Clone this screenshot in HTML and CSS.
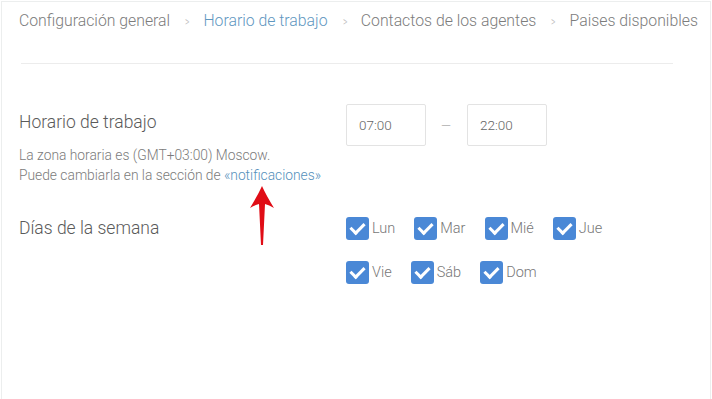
FILE: index.html
```html
<!DOCTYPE html>
<html lang="es">
  <head>
    <meta charset="UTF-8" />
    <title>Horario de trabajo</title>
    <link rel="stylesheet" href="styles.css">
  </head>
  <body>
    <div class="panel">
      <nav class="crumbs">
        <span>Configuración general</span>
        <span class="sep">&gt;</span>
        <span class="active">Horario de trabajo</span>
        <span class="sep">&gt;</span>
        <span>Contactos de los agentes</span>
        <span class="sep">&gt;</span>
        <span>Paises disponibles</span>
      </nav>
      <hr class="rule" />

      <section class="row hours">
        <div class="label">
          <h2>Horario de trabajo</h2>
          <p class="hint">La zona horaria es (GMT+03:00) Moscow.<br />
            Puede cambiarla en la sección de <a href="#">«notificaciones»</a></p>
          <!-- red pointer over the link -->
          <svg class="pointer" width="26" height="60" viewBox="0 0 26 60">
            <path d="M13 0 Q17 9 25 22 Q20 19 16 18 L14 59 L12 59 L10 18 Q6 19 1 22 Q9 9 13 0 Z" fill="#e00d16" />
          </svg>
        </div>
        <div class="times">
          <div class="time">07:00</div>
          <span class="dash">—</span>
          <div class="time">22:00</div>
        </div>
      </section>

      <section class="row days">
        <div class="label">
          <h2>Días de la semana</h2>
        </div>
        <div class="checks">
          <div class="line">
            <label class="check"><span class="box"></span>Lun</label>
            <label class="check"><span class="box"></span>Mar</label>
            <label class="check"><span class="box"></span>Mié</label>
            <label class="check"><span class="box"></span>Jue</label>
          </div>
          <div class="line">
            <label class="check"><span class="box"></span>Vie</label>
            <label class="check"><span class="box"></span>Sáb</label>
            <label class="check"><span class="box"></span>Dom</label>
          </div>
        </div>
      </section>
    </div>
  </body>
</html>
```

FILE: styles.css
```css
:root {
  --text: #777;
  --blue: #4a88d6;
  --link: #5590bb;
}
* {
  box-sizing: border-box;
}
body {
  margin: 0;
  font-family: Roboto, "Liberation Sans", Arial, sans-serif;
  font-weight: 300;
  color: var(--text);
  background: #fff;
}
.panel {
  margin: 1px 1px 0 1px;
  height: 398px;
  border: 1px solid #eceeee;
  border-bottom: none;
  padding: 8px 0 0 17px;
}
.crumbs {
  display: flex;
  align-items: center;
  font-size: 15.8px;
  color: #7c7c7c;
  white-space: nowrap;
  height: 20px;
}
.crumbs .sep {
  font-size: 12px;
  color: #bbb;
  margin: 3px 13px 0 14px;
  transform: scaleX(0.7);
}
.crumbs .active {
  color: #5f97bf;
}
.rule {
  margin: 33px 0 0 2px;
  width: 652px;
  border: none;
  border-top: 1px solid #ececec;
}
.row {
  display: flex;
  align-items: flex-start;
}
.label {
  width: 327px;
  position: relative;
}
.label h2 {
  margin: 0;
  font-size: 17.5px;
  font-weight: 300;
  line-height: 20px;
  color: #5a5a5a;
}
.hours {
  margin-top: 40px;
}
.hours h2 {
  margin-top: 8px;
}
.hint {
  margin: 13px 0 0 0;
  font-size: 13.8px;
  line-height: 20px;
  color: #7b7b7b;
}
.hint a {
  color: var(--link);
  text-decoration: none;
}
.pointer {
  position: absolute;
  left: 230px;
  top: 82px;
}
.times {
  display: flex;
  align-items: center;
}
.time {
  width: 80px;
  height: 42px;
  border: 1px solid #e3e3e3;
  border-radius: 2px;
  padding: 12px 0 0 12px;
  font-size: 13.5px;
  color: #666;
}
.dash {
  margin: 0 16px 0 15px;
  color: #888;
  font-size: 13px;
}
.days {
  margin-top: 32px;
}
.days h2 {
  margin-top: 1px;
}
.line {
  display: flex;
  margin-bottom: 21px;
}
.check {
  display: flex;
  align-items: center;
  font-size: 14.5px;
  color: #777;
  margin-right: 19px;
}
.box {
  width: 23px;
  height: 23px;
  border-radius: 3px;
  background: var(--blue);
  margin-right: 3px;
  position: relative;
}
.box::after {
  content: "";
  position: absolute;
  left: 7px;
  top: 3px;
  width: 6px;
  height: 11px;
  border: solid #fff;
  border-width: 0 3px 3px 0;
  transform: rotate(45deg);
}
```
